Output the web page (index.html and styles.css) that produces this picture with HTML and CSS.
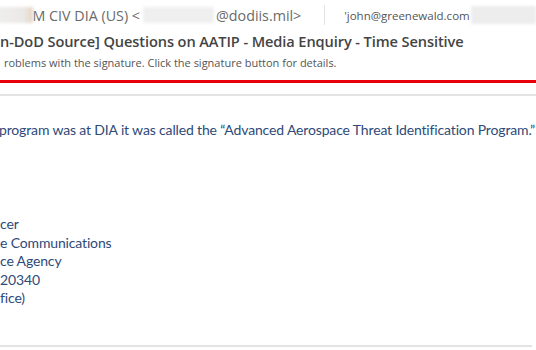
FILE: index.html
```html
<!DOCTYPE html>
<html>
<head>
<meta charset="utf-8">
<link rel="stylesheet" href="styles.css">
</head>
<body>
<div class="page">
  <header class="hdr">
    <div class="from">
      <span class="blur b1"></span>
      <span class="name">M CIV DIA (US) &lt;</span>
      <span class="blur b2"></span>
      <span class="name">@dodiis.mil&gt;</span>
      <span class="sep"></span>
      <span class="to">'john@greenewald.com</span>
      <span class="blur b3"></span>
    </div>
    <div class="subject">n-DoD Source] Questions on AATIP - Media Enquiry - Time Sensitive</div>
    <div class="warn">roblems with the signature. Click the signature button for details.</div>
    <div class="redline"></div>
  </header>
  <div class="rule"></div>
  <main class="msg">
    <p class="para">program was at DIA it was called the “Advanced Aerospace Threat Identification Program.”</p>
    <div class="sig">
      <div class="sig-line">cer</div>
      <div class="sig-line">e Communications</div>
      <div class="sig-line">ce Agency</div>
      <div class="sig-line">20340</div>
      <div class="sig-line">fice)</div>
    </div>
  </main>
  <div class="rule bottom"></div>
</div>
</body>
</html>
```

FILE: styles.css
```css
html, body {
  margin: 0;
  padding: 0;
  background: #ffffff;
}
.page {
  width: 536px;
  height: 350px;
  overflow: hidden;
  font-family: "Open Sans", "Noto Sans", sans-serif;
}
.hdr {
  display: flex;
  flex-direction: column;
}
.from {
  height: 30px;
  display: flex;
  align-items: center;
  white-space: nowrap;
  font-size: 14.3px;
  color: #6a6a6a;
}
.blur {
  display: inline-block;
  height: 16px;
  background: #ececec;
  filter: blur(1.5px);
}
.b1 {
  width: 37px;
  margin-left: -2px;
  background: linear-gradient(90deg, #eeeeee 0%, #ebe9e7 70%, #e6d7c4 100%);
}
.b2 {
  width: 76px;
  margin-left: 3px;
  margin-right: 2px;
  background: #efefef;
}
.b3 {
  width: 70px;
  height: 18px;
  background: #ededed;
}
.sep {
  width: 1px;
  height: 20px;
  background: #e2e2e2;
  margin-left: 23px;
  margin-right: 19px;
}
.to {
  font-size: 11.5px;
  color: #555;
  margin-right: 1px;
}
.subject {
  height: 22px;
  display: flex;
  align-items: center;
  white-space: nowrap;
  font-size: 14.6px;
  font-weight: 600;
  color: #444444;
  letter-spacing: -0.1px;
}
.warn {
  height: 20px;
  display: flex;
  align-items: center;
  white-space: nowrap;
  font-size: 11px;
  color: #555555;
  padding-left: 4px;
}
.redline {
  margin-top: 8px;
  height: 3px;
  background: #e8000b;
}
.rule {
  margin-top: 11px;
  height: 2px;
  background: #e3e3e3;
}
.msg {
  font-family: "Lato", "Open Sans", sans-serif;
  color: #2e4a78;
  font-size: 14px;
  letter-spacing: -0.15px;
}
.para {
  margin: 24px 0 0 -1px;
  height: 20px;
  line-height: 20px;
  white-space: nowrap;
}
.sig {
  margin-top: 75px;
  display: flex;
  flex-direction: column;
}
.sig-line {
  height: 18.5px;
  line-height: 18.5px;
  white-space: nowrap;
}
.rule.bottom {
  margin-top: 37px;
  width: 532px;
}
```
